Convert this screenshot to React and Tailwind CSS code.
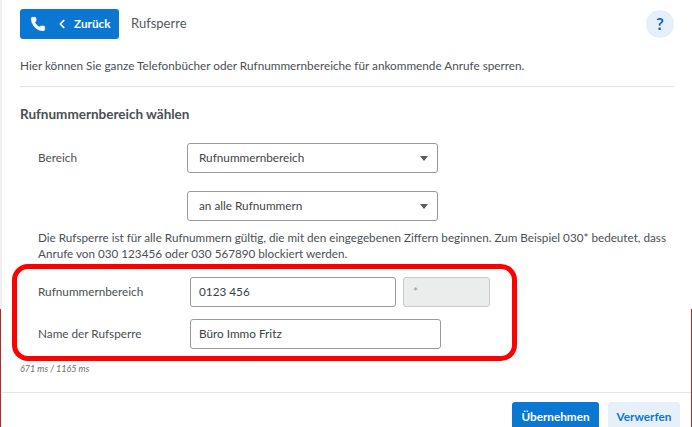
import React from 'react';
import { Phone, ChevronLeft } from 'lucide-react';

const Caret = () => (
  <span className="w-0 h-0 border-x-[4.5px] border-x-transparent border-t-[5px] border-t-[#555b60]" />
);

const SelectBox = ({ children }) => (
  <div className="w-[251px] h-[30px] ml-[187px] pl-[11px] pr-[9px] flex items-center justify-between border border-[#9a9a9a] rounded-[3px] bg-white text-[#3f4448]">
    <span>{children}</span>
    <Caret />
  </div>
);

const TextBox = ({ width, children }) => (
  <div className={`${width} h-[30px] pl-[8px] flex items-center border border-[#9a9a9a] rounded-[3px] bg-white text-[#3a3f43]`}>
    {children}
  </div>
);

export default function App() {
  return (
    <div className="relative w-[692px] h-[427px] overflow-hidden bg-white text-[11.75px] text-[#4a4f54] font-['Lato',sans-serif]">
      <div className="absolute left-0 top-0 w-[2px] h-[309px] bg-[#f0f0f0]" />
      <div className="absolute left-0 top-[309px] w-[1px] h-[118px] bg-[#b02a2a]" />
      <div className="absolute right-0 top-[309px] w-[1px] h-[118px] bg-[#b02a2a]" />

      <div className="pl-[20px] pr-[18px] pt-[9px]">
        <div className="flex items-center h-[30px]">
          <button className="w-[99px] h-[30px] pl-[10px] flex items-center rounded-[3px] bg-[#0a78d2] text-white font-bold">
            <Phone size={16} fill="white" strokeWidth={1} className="mr-[9px]" />
            <ChevronLeft size={14} strokeWidth={3} className="mr-[5px]" />
            Zurück
          </button>
          <span className="ml-[12px] text-[13px] text-[#53585c]">Rufsperre</span>
          <span className="ml-auto w-[28px] h-[28px] flex items-center justify-center rounded-full bg-[#e6f0fb] text-[#0a6cc0] font-bold text-[17px]">?</span>
        </div>

        <p className="mt-[18px] h-[18px] leading-[18px]">Hier können Sie ganze Telefonbücher oder Rufnummernbereiche für ankommende Anrufe sperren.</p>
        <div className="mt-[11px] h-[1px] bg-[#e2e2e2]" />

        <h2 className="mt-[17px] h-[20px] leading-[20px] text-[13.5px] font-bold text-[#4a4f54]">Rufnummernbereich wählen</h2>

        <div className="relative mt-[19px]">
          <span className="absolute left-[18px] top-[6px]">Bereich</span>
          <div className="-ml-[20px]">
            <SelectBox>Rufnummernbereich</SelectBox>
            <div className="h-[18px]" />
            <SelectBox>an alle Rufnummern</SelectBox>
          </div>
        </div>

        <p className="mt-[8px] ml-[18px] leading-[16px] text-[11.7px] text-[#4a4f54]">
          Die Rufsperre ist für alle Rufnummern gültig, die mit den eingegebenen Ziffern beginnen. Zum Beispiel 030* bedeutet, dass Anrufe von 030 123456 oder 030 567890 blockiert werden.
        </p>

        <div className="mt-[3px] -ml-[8px] w-[505px] h-[97px] pl-[21px] pt-[8px] border-[5px] border-[#ff0000] rounded-[16px]">
          <div className="flex items-center">
            <span className="w-[152px]">Rufnummernbereich</span>
            <TextBox width="w-[206px]">0123 456</TextBox>
            <div className="ml-[7px] w-[87px] h-[30px] pl-[9px] pt-[5px] border border-[#c8c8c8] rounded-[3px] bg-[#ebeded] text-[#9a9a9a]">*</div>
          </div>
          <div className="flex items-center mt-[12px]">
            <span className="w-[152px]">Name der Rufsperre</span>
            <TextBox width="w-[251px]">Büro Immo Fritz</TextBox>
          </div>
        </div>

        <p className="mt-[2px] italic text-[9px] leading-[12px] text-[#6b6b6b]">671 ms / 1165 ms</p>
      </div>

      <div className="absolute left-[2px] right-[1px] top-[392px] h-[1px] bg-[#e4e4e4]" />
      <div className="absolute right-[12px] top-[402px] flex gap-[9px]">
        <button className="w-[87px] h-[30px] rounded-[3px] bg-[#0a78d2] text-white font-bold">Übernehmen</button>
        <button className="w-[72px] h-[30px] rounded-[3px] bg-[#e6f0fb] text-[#0a78d2] font-bold">Verwerfen</button>
      </div>
    </div>
  );
}
